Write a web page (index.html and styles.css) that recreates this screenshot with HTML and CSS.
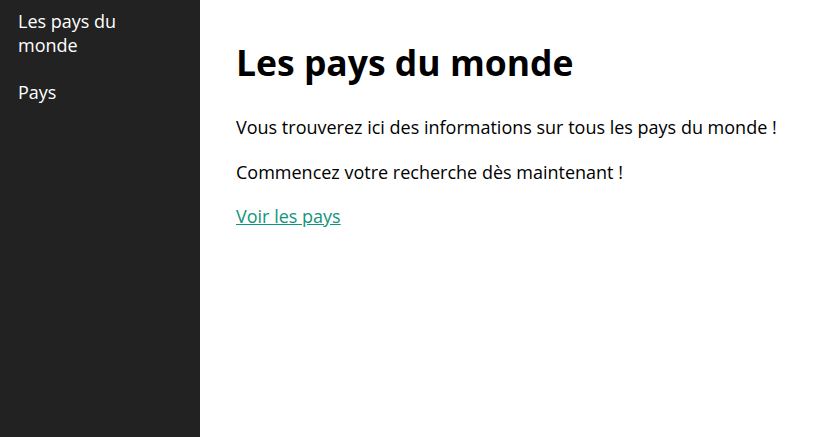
FILE: index.html
```html
<!DOCTYPE html>
<html lang="fr">
<head>
<meta charset="utf-8">
<title>Les pays du monde</title>
<link rel="stylesheet" href="styles.css">
</head>
<body>
<div class="layout">
  <nav class="sidebar">
    <a class="nav-link" href="#">Les pays du monde</a>
    <a class="nav-link" href="#">Pays</a>
  </nav>
  <main class="content">
    <h1 class="title">Les pays du monde</h1>
    <p class="text">Vous trouverez ici des informations sur tous les pays du monde !</p>
    <p class="text">Commencez votre recherche dès maintenant !</p>
    <p class="text"><a class="link" href="#">Voir les pays</a></p>
  </main>
</div>
</body>
</html>
```
FILE: styles.css
```css
html, body {
  margin: 0;
  padding: 0;
  height: 100%;
}
body {
  font-family: "Open Sans", sans-serif;
  color: #000;
  background: #fff;
}
.layout {
  display: flex;
  min-height: 100%;
}
.sidebar {
  width: 200px;
  flex-shrink: 0;
  background: #222222;
  box-sizing: border-box;
  padding: 9px 18px;
  display: flex;
  flex-direction: column;
  gap: 23px;
}
.nav-link {
  color: #fff;
  text-decoration: none;
  font-size: 18px;
  line-height: 24px;
  width: 120px;
}
.content {
  flex: 1;
  padding: 0 36px;
}
.title {
  font-size: 35.5px;
  font-weight: 700;
  margin: 38px 0 29px;
  line-height: 48px;
}
.text {
  font-size: 18px;
  line-height: 24px;
  margin: 0 0 20.5px;
}
.link {
  color: #10957a;
}
```
